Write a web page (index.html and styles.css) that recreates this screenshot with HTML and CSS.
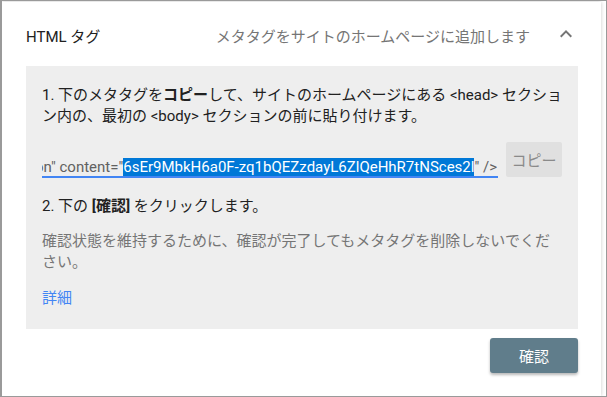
FILE: index.html
```html
<!DOCTYPE html>
<html lang="ja">
<head>
<meta charset="utf-8">
<link rel="stylesheet" href="styles.css">
</head>
<body>
<div class="frame">
  <div class="card">
    <div class="header">
      <div class="title">HTML タグ</div>
      <div class="desc">メタタグをサイトのホームページに追加します</div>
      <svg class="chev" width="24" height="24" viewBox="0 0 24 24"><path d="M12 8l-6 6 1.41 1.41L12 10.83l4.59 4.58L18 14z" fill="#757575"/></svg>
    </div>
    <div class="box">
      <p class="step">1. 下のメタタグを<b>コピー</b>して、サイトのホームページにある &lt;head&gt; セクショ<br>ン内の、最初の &lt;body&gt; セクションの前に貼り付けます。</p>
      <div class="row">
        <div class="field"><span class="code">&lt;meta name="google-site-verification" content="<span class="sel">6sEr9MbkH6a0F-zq1bQEZzdayL6ZlQeHhR7tNSces2l</span>" /&gt;</span></div>
        <div class="copy">コピー</div>
      </div>
      <p class="step2">2. 下の <b>[確認]</b> をクリックします。</p>
      <p class="note">確認状態を維持するために、確認が完了してもメタタグを削除しないでください。</p>
      <a class="more" href="#">詳細</a>
    </div>
    <div class="footer">
      <div class="verify">確認</div>
    </div>
  </div>
</div>
</body>
</html>
```
FILE: styles.css
```css
* { box-sizing: border-box; }
html, body { margin: 0; padding: 0; }
body {
  font-family: "Roboto", "Noto Sans CJK JP", sans-serif;
  font-size: 15px;
  color: #212121;
  background: #fff;
}
.frame {
  width: 607px;
  height: 397px;
  border: 1px solid #9a9a9a;
  border-left-width: 2px;
  padding: 1px 5px 0 0;
  background: #fff;
  overflow: hidden;
}
.card {
  height: 100%;
  background: #fff;
  box-shadow: 0 0 4px rgba(0,0,0,0.22);
  padding: 0 23px 0 24px;
  display: flex;
  flex-direction: column;
}
.header {
  height: 62px;
  margin-top: 2px;
  display: flex;
  align-items: center;
}
.title { flex: 1; color: #212121; }
.desc { color: #757575; margin-right: 24px; }
.chev { display: block; margin-top: -3px; }
.box {
  background: #eeeeee;
  padding: 19px 16px 20px 16px;
}
.box p { margin: 0; line-height: 21px; }
.step { white-space: nowrap; }
.step b, .step2 b { font-weight: 700; }
.row {
  margin-top: 15px;
  height: 36px;
  display: flex;
  gap: 8px;
}
.field {
  flex: 1;
  min-width: 0;
  overflow: hidden;
  border-bottom: 2px solid #4285f4;
  display: flex;
  justify-content: flex-end;
  align-items: flex-end;
  white-space: nowrap;
  color: #616161;
  font-family: "Roboto", sans-serif;
}
.code { line-height: 18px; padding-right: 1px; flex-shrink: 0; }
.sel { background: #0078d7; color: #fff; }
.copy {
  width: 56px;
  height: 35px;
  background: #e0e0e0;
  color: #8a8a8a;
  border-radius: 2px;
  display: flex;
  align-items: center;
  justify-content: center;
}
.step2 { margin-top: 18px !important; }
.note { margin-top: 14px !important; color: #757575; }
.more {
  display: block;
  margin-top: 15px;
  line-height: 21px;
  color: #4285f4;
  text-decoration: none;
}
.footer {
  padding-top: 9px;
  display: flex;
  justify-content: flex-end;
}
.verify {
  width: 88px;
  height: 35px;
  background: #607d8b;
  color: #fff;
  border-radius: 3px;
  box-shadow: 0 2px 3px rgba(0,0,0,0.28);
  display: flex;
  align-items: center;
  justify-content: center;
}
```
